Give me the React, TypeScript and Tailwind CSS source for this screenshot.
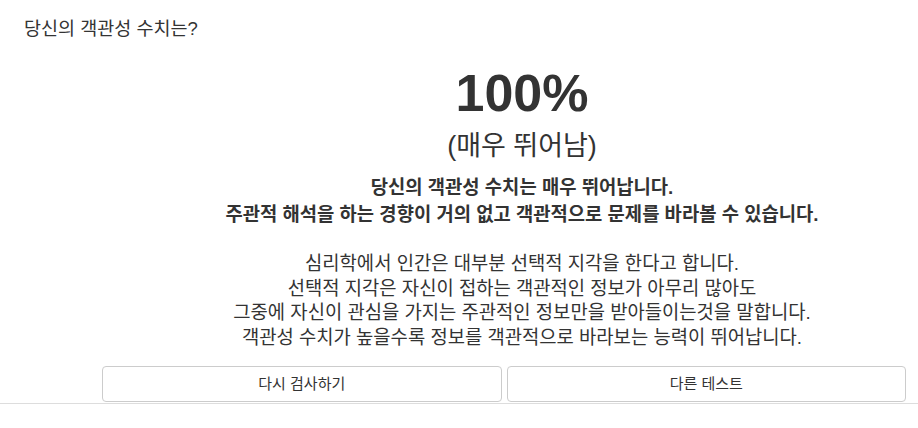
import React from "react";

export default function App() {
  const font = { fontFamily: '"Liberation Sans", "Noto Sans CJK KR", sans-serif' };
  return (
    <div className="w-[918px] h-[428px] bg-white text-[#333]" style={font}>
      <div className="pt-[17px] pl-[24px] text-[18.5px] leading-[24px]">당신의 객관성 수치는?</div>
      <div className="ml-[126px] w-[792px] text-center">
        <div className="mt-[22px] text-[52px] font-bold leading-[60px]">100%</div>
        <div className="mt-[7px] text-[27px] leading-[32px]">(매우 뛰어남)</div>
        <div className="mt-[12px] text-[18.8px] font-bold leading-[27px]">
          <div>당신의 객관성 수치는 매우 뛰어납니다.</div>
          <div>주관적 해석을 하는 경향이 거의 없고 객관적으로 문제를 바라볼 수 있습니다.</div>
        </div>
        <div className="mt-[24px] text-[18.8px] leading-[24.5px]">
          <div>심리학에서 인간은 대부분 선택적 지각을 한다고 합니다.</div>
          <div>선택적 지각은 자신이 접하는 객관적인 정보가 아무리 많아도</div>
          <div>그중에 자신이 관심을 가지는 주관적인 정보만을 받아들이는것을 말합니다.</div>
          <div>객관성 수치가 높을수록 정보를 객관적으로 바라보는 능력이 뛰어납니다.</div>
        </div>
      </div>
      <div className="mt-[16px] border-b border-[#ddd] pb-[1px]">
        <div className="ml-[102px] w-[804px] grid grid-cols-2 gap-[5px]">
          <button className="h-[36px] border border-[#ccc] rounded-[4px] bg-white text-[15px] text-[#333]">다시 검사하기</button>
          <button className="h-[36px] border border-[#ccc] rounded-[4px] bg-white text-[15px] text-[#333]">다른 테스트</button>
        </div>
      </div>
    </div>
  );
}
